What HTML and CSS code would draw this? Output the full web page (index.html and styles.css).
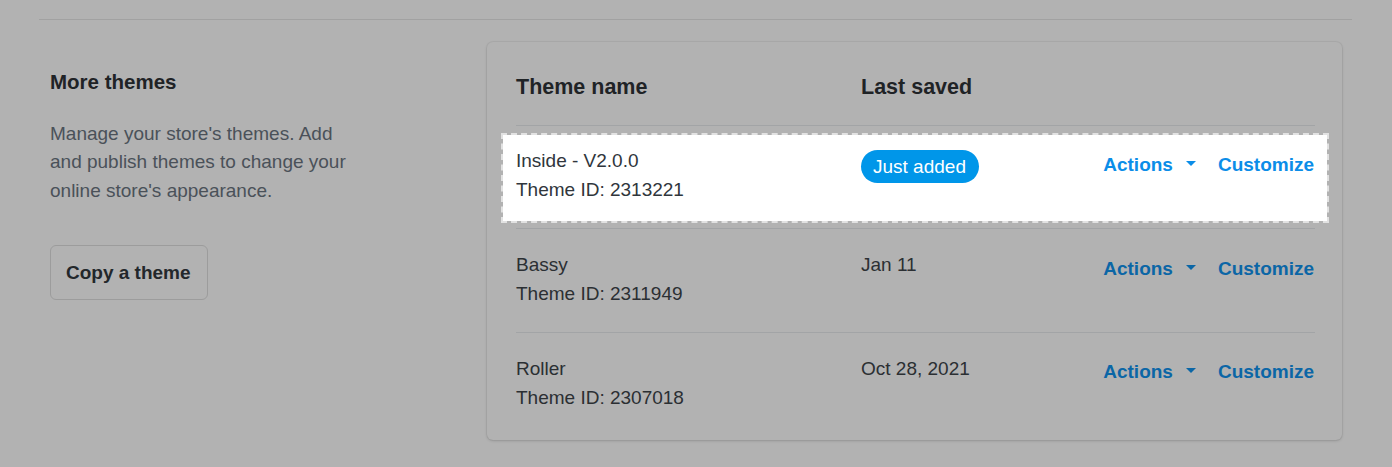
FILE: index.html
```html
<!DOCTYPE html>
<html lang="en">
<head>
<meta charset="utf-8">
<title>Themes</title>
<link rel="stylesheet" href="styles.css">
</head>
<body>
<div class="page">
  <section class="section">
    <div class="intro">
      <h2 class="intro-title">More themes</h2>
      <p class="intro-text">Manage your store's themes. Add and publish themes to change your online store's appearance.</p>
      <button class="btn" type="button">Copy a theme</button>
    </div>
    <div class="card">
      <div class="thead">
        <div class="th">Theme name</div>
        <div class="th">Last saved</div>
        <div></div>
      </div>
      <div class="row row-active">
        <div class="name">
          <div>Inside - V2.0.0</div>
          <div>Theme ID: 2313221</div>
        </div>
        <div class="date"><span class="badge">Just added</span></div>
        <div class="actions">
          <a class="link action-menu">Actions<svg class="caret" width="10" height="5" viewBox="0 0 10 5"><path d="M0 0h10L5 5z"/></svg></a>
          <a class="link">Customize</a>
        </div>
      </div>
      <div class="row">
        <div class="name">
          <div>Bassy</div>
          <div>Theme ID: 2311949</div>
        </div>
        <div class="date">Jan 11</div>
        <div class="actions">
          <a class="link action-menu">Actions<svg class="caret" width="10" height="5" viewBox="0 0 10 5"><path d="M0 0h10L5 5z"/></svg></a>
          <a class="link">Customize</a>
        </div>
      </div>
      <div class="row row-last">
        <div class="name">
          <div>Roller</div>
          <div>Theme ID: 2307018</div>
        </div>
        <div class="date">Oct 28, 2021</div>
        <div class="actions">
          <a class="link action-menu">Actions<svg class="caret" width="10" height="5" viewBox="0 0 10 5"><path d="M0 0h10L5 5z"/></svg></a>
          <a class="link">Customize</a>
        </div>
      </div>
    </div>
  </section>
</div>
</body>
</html>
```
FILE: styles.css
```css
* { box-sizing: border-box; }
html, body {
  margin: 0;
  padding: 0;
  background: #b2b2b2;
  font-family: "Liberation Sans", Arial, sans-serif;
  font-size: 19px;
  color: #2b2f33;
  height: 100%;
  overflow: hidden;
}
.page {
  margin: 19px 40px 0 39px;
  border-top: 1px solid #a1a1a1;
}
.section {
  display: grid;
  grid-template-columns: 448px 855px;
  padding-top: 22px;
}
.intro {
  padding: 28px 0 0 11px;
}
.intro-title {
  margin: 0;
  font-size: 20.5px;
  line-height: 24.6px;
  font-weight: 700;
  color: #1f2326;
}
.intro-text {
  margin: 25px 0 0;
  width: 310px;
  line-height: 28.5px;
  color: #4a5159;
}
.btn {
  margin-top: 40px;
  display: inline-block;
  font-family: inherit;
  font-size: 19px;
  font-weight: 700;
  line-height: 29px;
  padding: 12px 15px 12px 15px;
  width: 158px;
  color: #22272b;
  background: #b2b2b2;
  border: 1px solid #9c9c9c;
  border-radius: 6px;
  text-align: left;
}
.card {
  background: #b2b2b2;
  border-radius: 6px;
  box-shadow: 0 0 0 1px rgba(0,0,0,0.035), 0 1px 3px rgba(0,0,0,0.15);
  padding: 0 27px 5px 29px;
  height: 398px;
}
.thead, .row {
  display: grid;
  grid-template-columns: 345px 1fr auto;
}
.thead {
  padding: 31.5px 0 25px;
  border-bottom: 1px solid #a2a4a6;
}
.th {
  font-size: 21.5px;
  line-height: 26px;
  font-weight: 700;
  color: #1f2326;
}
.row {
  position: relative;
  z-index: 0;
  padding: 21px 0 23.5px;
  border-bottom: 1px solid #a2a4a6;
  line-height: 29px;
}
.row-last { border-bottom: none; }
.row-active { padding-top: 20.5px; padding-bottom: 24px; }
.row-active::before {
  content: "";
  position: absolute;
  z-index: -1;
  top: 7px;
  bottom: 5px;
  left: -15px;
  right: -14px;
  background: #ffffff;
  background-clip: padding-box;
  border: 2px dashed #e2e2e2;
}
.row-active { color: #30363c; }
.badge {
  display: inline-block;
  margin-top: 3.5px;
  padding: 2px 13px 2px 12px;
  line-height: 29px;
  border-radius: 17px;
  background: #0096e9;
  color: #ffffff;
}
.actions {
  display: flex;
  align-items: center;
  gap: 22px;
  padding-top: 3.5px;
  margin-right: 1px;
  align-self: start;
}
.link {
  font-weight: 700;
  color: #0b66a6;
  text-decoration: none;
  display: inline-flex;
  align-items: center;
}
.row-active .link { color: #0b8de8; }
.caret {
  margin-left: 13px;
  margin-top: -2px;
  fill: currentColor;
}
```
